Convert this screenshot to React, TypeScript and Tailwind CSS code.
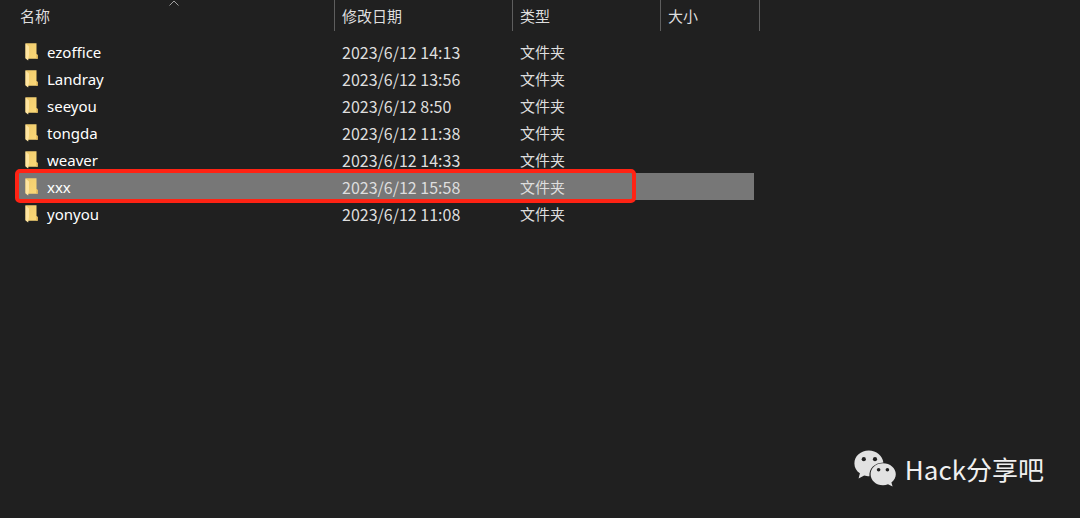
import { useId } from "react";

type Entry = { name: string; modified: string; selected?: boolean };

const entries: Entry[] = [
  { name: "ezoffice", modified: "2023/6/12 14:13" },
  { name: "Landray", modified: "2023/6/12 13:56" },
  { name: "seeyou", modified: "2023/6/12 8:50" },
  { name: "tongda", modified: "2023/6/12 11:38" },
  { name: "weaver", modified: "2023/6/12 14:33" },
  { name: "xxx", modified: "2023/6/12 15:58", selected: true },
  { name: "yonyou", modified: "2023/6/12 11:08" },
];

function FolderIcon() {
  const id = useId();
  return (
    <svg viewBox="0 0 13 18" className="h-[18px] w-[13px] shrink-0" aria-hidden="true">
      <defs>
        <linearGradient id={id} x1="0" y1="0" x2="1" y2="1">
          <stop offset="0" stopColor="#efcb6c" />
          <stop offset="1" stopColor="#fbd979" />
        </linearGradient>
      </defs>
      <path d="M0.5 0.3H11.5V11L12.7 12V15.8H2.5L0.5 15Z" fill={`url(#${id})`} />
      <path d="M11.5 11L12.7 12V15.8H11.2Z" fill="#e3b758" />
      <path d="M0.5 0.6L4 3.4V11.5L3.2 17.4L0.5 15.4Z" fill="#ffe5a0" />
    </svg>
  );
}

function WeChatIcon() {
  return (
    <svg viewBox="0 0 42 37" className="h-[37px] w-[42px]" aria-hidden="true">
      <path
        d="M14.8 0.5C6.8 0.5 0.4 6 0.4 13.4C0.4 17.6 2.4 20.8 5.9 23.3L4.6 28.6L10.2 25.5C12 26 13.4 26.2 15.4 26.2C15 19.2 19.8 13 29.4 12.6C28.5 5.5 22.4 0.5 14.8 0.5Z"
        fill="#e2e2e2"
      />
      <path
        d="M29 13.2C21.9 13.2 16.6 18 16.6 24.2C16.6 30.4 22 35.2 29 35.2C30.8 35.2 32.5 34.8 34 34.3L38.6 36.6L37.4 32.4C40.2 30.4 41.8 27.4 41.8 24.2C41.8 18 36 13.2 29 13.2Z"
        fill="#e2e2e2"
      />
      <g fill="#202020">
        <circle cx="9.8" cy="9.2" r="2.1" />
        <circle cx="21" cy="9.2" r="2.1" />
        <circle cx="24.6" cy="19.8" r="1.8" />
        <circle cx="33.4" cy="19.8" r="1.8" />
      </g>
    </svg>
  );
}

export default function App() {
  return (
    <main className="flex min-h-screen flex-col justify-between bg-[#202020] font-['Noto_Sans','Noto_Sans_CJK_SC',sans-serif] text-[15px] leading-5 text-[#dedede]">
      <table className="ml-[18px] w-[742px] table-fixed border-separate border-spacing-0 text-left">
        <colgroup>
          <col className="w-[317px]" />
          <col className="w-[178px]" />
          <col className="w-[148px]" />
          <col />
        </colgroup>
        <thead>
          <tr className="h-[31px]">
            <th scope="col" className="relative border-r border-[#5e5e5e] p-0 pt-px pl-[2px] font-normal">
              名称
              <svg viewBox="0 0 12 6" className="absolute top-0 left-[150px] h-[6px] w-[12px]" aria-hidden="true">
                <path d="M1.5 5.5L6 1L10.5 5.5" fill="none" stroke="#a0a0a0" />
              </svg>
            </th>
            <th scope="col" className="border-r border-[#5e5e5e] p-0 pt-px pl-[7px] font-normal">修改日期</th>
            <th scope="col" className="border-r border-[#5e5e5e] p-0 pt-px pl-[7px] font-normal">类型</th>
            <th scope="col" className="border-r border-[#5e5e5e] p-0 pt-px pl-[7px] font-normal">大小</th>
          </tr>
        </thead>
        <tbody>
          <tr className="h-[7px]"><td colSpan={4} className="p-0" /></tr>
          {entries.map((entry) => (
            <tr
              key={entry.name}
              aria-selected={entry.selected}
              className="h-[27px] aria-selected:*:bg-[#777777]"
            >
              <td className="relative p-0 pl-[7px] text-white">
                <div className="flex items-center gap-[9px]">
                  <FolderIcon />
                  {entry.name}
                </div>
                {entry.selected && (
                  <span className="absolute -top-[4px] -left-[3px] z-10 h-[34px] w-[621px] rounded-[5px] border-4 border-[#ff2314]" />
                )}
              </td>
              <td className="p-0 pl-[7px] font-['Noto_Sans_CJK_SC',sans-serif] text-base leading-5">{entry.modified}</td>
              <td className="p-0 pl-[7px]">文件夹</td>
              <td className="border-r-[6px] border-transparent bg-clip-padding p-0" />
            </tr>
          ))}
        </tbody>
      </table>
      <footer className="mr-9 mb-[31px] flex items-center gap-[9px] self-end font-['Noto_Sans_CJK_SC',sans-serif] text-[26px] leading-9 text-[#f0f0f0]">
        <WeChatIcon />
        <span>Hack分享吧</span>
      </footer>
    </main>
  );
}
